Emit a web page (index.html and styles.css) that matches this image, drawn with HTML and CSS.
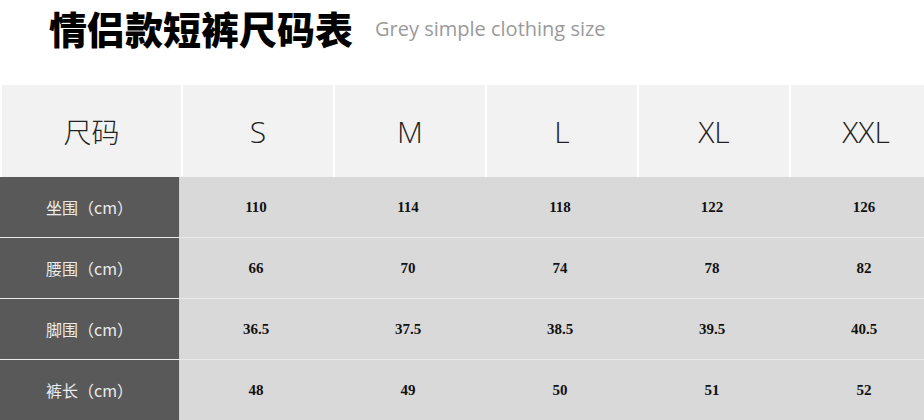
FILE: index.html
```html
<!DOCTYPE html>
<html lang="zh">
<head>
<meta charset="utf-8">
<link rel="stylesheet" href="styles.css">
</head>
<body>
<div class="page">
  <header class="title-bar">
    <h1 class="title">情侣款短裤尺码表</h1>
    <span class="subtitle">Grey simple clothing size</span>
  </header>
  <div class="table">
    <div class="head-row">
      <div class="hcell">尺码</div>
      <div class="hcell">S</div>
      <div class="hcell">M</div>
      <div class="hcell">L</div>
      <div class="hcell">XL</div>
      <div class="hcell">XXL</div>
    </div>
    <div class="body">
      <div class="row">
        <div class="label">坐围（cm）</div>
        <div class="val">110</div><div class="val">114</div><div class="val">118</div><div class="val">122</div><div class="val">126</div>
      </div>
      <div class="row">
        <div class="label">腰围（cm）</div>
        <div class="val">66</div><div class="val">70</div><div class="val">74</div><div class="val">78</div><div class="val">82</div>
      </div>
      <div class="row">
        <div class="label">脚围（cm）</div>
        <div class="val">36.5</div><div class="val">37.5</div><div class="val">38.5</div><div class="val">39.5</div><div class="val">40.5</div>
      </div>
      <div class="row">
        <div class="label">裤长（cm）</div>
        <div class="val">48</div><div class="val">49</div><div class="val">50</div><div class="val">51</div><div class="val">52</div>
      </div>
    </div>
  </div>
</div>
</body>
</html>
```
FILE: styles.css
```css
html, body {
  margin: 0;
  padding: 0;
  background: #ffffff;
  overflow: hidden;
}
.page {
  width: 924px;
  height: 420px;
  overflow: hidden;
}
.title-bar {
  height: 85px;
  display: flex;
  align-items: flex-start;
  padding-left: 49px;
  box-sizing: border-box;
}
.title {
  margin: 0;
  font-family: "Noto Sans CJK SC", sans-serif;
  font-weight: 900;
  font-size: 38px;
  line-height: normal;
  color: #000;
  white-space: nowrap;
}
.subtitle {
  margin-left: 22px;
  margin-top: 15px;
  font-family: "Open Sans", sans-serif;
  font-weight: 400;
  font-size: 20px;
  line-height: 28px;
  color: #9a9a9a;
  white-space: nowrap;
}
.table {
  width: 944px;
}
.head-row {
  display: grid;
  grid-template-columns: 179px repeat(5, 150px);
  column-gap: 2px;
  padding-left: 2px;
  height: 92px;
  background: #ffffff;
}
.hcell {
  background: #f2f2f2;
  display: flex;
  align-items: center;
  justify-content: center;
  font-family: "Open Sans", "Noto Sans CJK SC", sans-serif;
  font-weight: 300;
  font-size: 30px;
  color: #222;
}
.hcell:first-child {
  font-family: "Noto Sans CJK SC", sans-serif;
  font-weight: 300;
  font-size: 28px;
}
.row {
  display: grid;
  grid-template-columns: 180px repeat(5, 152px);
  height: 61px;
  border-top: 1px solid #ebebeb;
  box-sizing: border-box;
}
.row:first-child {
  border-top: none;
  height: 60px;
}
.label {
  background: #595959;
  border-right: 1px solid #d0d0d0;
  display: flex;
  align-items: center;
  justify-content: center;
  font-family: "Noto Sans CJK SC", sans-serif;
  font-size: 16px;
  color: #ececec;
}
.val {
  background: #d9d9d9;
  display: flex;
  align-items: center;
  justify-content: center;
  font-family: "Liberation Serif", serif;
  font-weight: 700;
  font-size: 15px;
  color: #111;
}
```
